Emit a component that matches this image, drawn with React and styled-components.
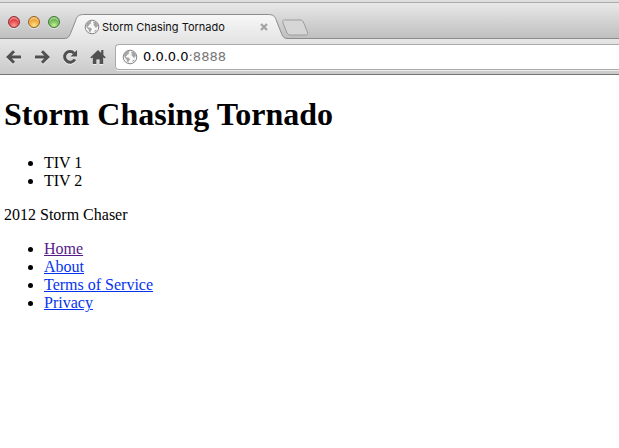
import React from "react";
import styled, { createGlobalStyle } from "styled-components";

const links = [
  { title: "Home", href: "#home", visited: true },
  { title: "About", href: "#about" },
  { title: "Terms of Service", href: "#terms" },
  { title: "Privacy", href: "#privacy" },
];

const Globe = () => (
  <svg width="16" height="16" viewBox="0 0 16 16" aria-hidden="true">
    <circle cx="8" cy="8" r="6.8" fill="#f8f8f8" stroke="#858585" />
    <path
      d="M2 6 3.4 3.4 6 1.8 7.6 2.4 6.6 3.6 7 4.8 5.4 5.6 4.6 7 3.6 7.2 4.4 8.4 6.8 8.8 8 10.2 6.6 12.2 6.4 14 5 12.6 4.6 10.4 2.8 8.8Z"
      fill="#a4a4a4"
    />
    <path
      d="M9.4 2.6 12 3 13.6 5 14.2 7.8 13 7.2 12.2 9.2 11 8 10.2 6.8 9.2 6 10.2 4.8 9.2 4ZM10.8 11.2 13 10.4 11.6 12.6 10.2 13Z"
      fill="#a4a4a4"
    />
  </svg>
);

const BackIcon = () => (
  <svg width="16" height="16" viewBox="0 0 16 16">
    <path d="M8 2.2 2.2 8 8 13.8M3 8H15" />
  </svg>
);

const ForwardIcon = () => (
  <svg width="16" height="16" viewBox="0 0 16 16">
    <path d="M8 2.2 13.8 8 8 13.8M13 8H1" />
  </svg>
);

const ReloadIcon = () => (
  <svg width="16" height="16" viewBox="0 0 16 16">
    <path d="M12 4.2A5.4 5.4 0 1 0 12.8 10.4" />
    <path d="M15 1V7.4H8.6Z" fill="#505050" stroke="none" />
  </svg>
);

const HomeIcon = () => (
  <svg width="16" height="16" viewBox="0 0 16 16">
    <path
      d="M8 1 .2 8.4 1.4 9.6 2.8 8.6V15H6.4V10.4H9.6V15H13.2V8.6L14.6 9.6 15.8 8.4 13.4 6V1H11.2V4Z"
      fill="#505050"
      stroke="none"
    />
  </svg>
);

const App = () => {
  return (
    <>
      <GlobalStyle />
      <Chrome>
        <TopEdge />
        <TabStrip>
          <WindowButtons>
            <WindowButton $rim="#8e2f30" $base="#e0383e" $glow="#ff9c94" aria-label="Close" />
            <WindowButton $rim="#93621c" $base="#eda033" $glow="#ffe48c" aria-label="Minimize" />
            <WindowButton $rim="#3f7630" $base="#66b34c" $glow="#c4f29c" aria-label="Zoom" />
          </WindowButtons>
          <Tab>
            <TabEdge viewBox="0 0 20 25" aria-hidden="true">
              <path d="M0 24.5C4 24.5 5 23 6.5 19.5L12 5.5C13.5 2 15 .5 20 .5V25H0Z" fill="url(#tabFill)" />
              <path d="M0 24.5C4 24.5 5 23 6.5 19.5L12 5.5C13.5 2 15 .5 20 .5" fill="none" stroke="#8c8c8c" />
              <defs>
                <linearGradient id="tabFill" x1="0" y1="0" x2="0" y2="1">
                  <stop offset="0" stopColor="#f7f7f7" />
                  <stop offset="1" stopColor="#e6e6e6" />
                </linearGradient>
              </defs>
            </TabEdge>
            <TabBody>
              <Globe />
              <TabTitle>Storm Chasing Tornado</TabTitle>
              <TabClose aria-label="Close tab">
                <svg width="8" height="8" viewBox="0 0 8 8">
                  <path d="M1 1 7 7M7 1 1 7" stroke="#a2a2a2" strokeWidth="2.2" />
                </svg>
              </TabClose>
            </TabBody>
            <TabEdge viewBox="0 0 20 25" aria-hidden="true">
              <path d="M20 24.5C16 24.5 15 23 13.5 19.5L8 5.5C6.5 2 5 .5 0 .5V25H20Z" fill="url(#tabFill)" />
              <path d="M20 24.5C16 24.5 15 23 13.5 19.5L8 5.5C6.5 2 5 .5 0 .5" fill="none" stroke="#8c8c8c" />
            </TabEdge>
          </Tab>
          <NewTab aria-label="New tab">
            <svg width="28" height="17" viewBox="0 0 28 17">
              <path
                d="M3.5 1H19C21 1 22 2 22.8 4L26.4 13C27.2 15 26.6 16 24.8 16H9.5C7.5 16 6.4 15 5.6 13L2 4C1.2 2 1.8 1 3.5 1Z"
                fill="#d6d6d6"
                stroke="#9c9c9c"
              />
            </svg>
          </NewTab>
        </TabStrip>
        <Toolbar>
          <ToolButtons>
            <ToolButton aria-label="Back">
              <BackIcon />
            </ToolButton>
            <ToolButton aria-label="Forward">
              <ForwardIcon />
            </ToolButton>
            <ToolButton aria-label="Reload">
              <ReloadIcon />
            </ToolButton>
            <ToolButton aria-label="Home">
              <HomeIcon />
            </ToolButton>
          </ToolButtons>
          <AddressBar>
            <Globe />
            <Address href="#home">
              0.0.0.0<span>:8888</span>
            </Address>
          </AddressBar>
        </Toolbar>
      </Chrome>
      <Page>
        <Title>Storm Chasing Tornado</Title>
        <List>
          <li>TIV 1</li>
          <li>TIV 2</li>
        </List>
        <Copyright>2012 Storm Chaser</Copyright>
        <List>
          {links.map((item) => (
            <li key={item.title}>
              <PageLink href={item.href} $visited={item.visited}>
                {item.title}
              </PageLink>
            </li>
          ))}
        </List>
      </Page>
    </>
  );
};

export default App;

const GlobalStyle = createGlobalStyle`
  * {
    box-sizing: border-box;
  }

  body {
    margin: 0;
    background: #fff;
  }

  button {
    padding: 0;
    border: none;
    background: none;
  }

  svg {
    display: block;
    flex-shrink: 0;
  }
`;

const Chrome = styled.header`
  font-family: "DejaVu Sans", sans-serif;
`;

const TopEdge = styled.div`
  height: 3px;
  background: #dedede;
  border-bottom: 1px solid #aaa;
`;

const TabStrip = styled.div`
  display: flex;
  align-items: flex-end;
  height: 36px;
  background: linear-gradient(#e8e8e8, #bebebe);
  box-shadow: inset 0 -1px #8c8c8c;
`;

const WindowButtons = styled.div`
  display: flex;
  align-self: center;
  gap: 8px;
  padding: 2px 0 0 8px;
`;

const WindowButton = styled.button`
  width: 12px;
  height: 12px;
  border-radius: 50%;
  border: 1px solid ${(props) => props.$rim};
  background: radial-gradient(
    circle at 50% 85%,
    ${(props) => props.$glow},
    ${(props) => props.$base} 60%
  );
  box-shadow: inset 0 2px 1px rgba(255, 255, 255, 0.4), 0 1px #e6e6e6;
`;

const Tab = styled.div`
  display: flex;
  height: 25px;
  margin-left: 4px;
`;

const TabEdge = styled.svg`
  width: 20px;
  height: 25px;
`;

const TabBody = styled.div`
  display: flex;
  align-items: center;
  width: 184px;
  border-top: 1px solid #8c8c8c;
  background: linear-gradient(#f7f7f7, #e6e6e6);
`;

const TabTitle = styled.span`
  flex: 1;
  padding-left: 2px;
  font-family: Inter, sans-serif;
  font-size: 11px;
  line-height: 16px;
  color: #111;
  white-space: nowrap;
`;

const TabClose = styled.button`
  padding-right: 0;
`;

const NewTab = styled.button`
  align-self: center;
  margin-left: -7px;
  padding-top: 12px;
`;

const Toolbar = styled.div`
  display: flex;
  align-items: center;
  gap: 9px;
  height: 36px;
  padding-left: 6px;
  background: linear-gradient(#e6e6e6, #cacaca);
  border-bottom: 1px solid #777;
`;

const ToolButtons = styled.div`
  display: flex;
  gap: 12px;
`;

const ToolButton = styled.button`
  filter: drop-shadow(0 1px #eee);

  svg {
    fill: none;
    stroke: #505050;
    stroke-width: 3;
  }
`;

const AddressBar = styled.div`
  display: flex;
  align-items: center;
  flex: 1;
  gap: 5px;
  height: 26px;
  padding-left: 6px;
  background: #fff;
  border: 1px solid #aaa;
  border-right: none;
  border-radius: 4px 0 0 4px;
  box-shadow: 0 1px #eee;
`;

const Address = styled.a`
  font-size: 13px;
  line-height: 18px;
  color: #000;
  text-decoration: none;

  span {
    color: #777;
  }
`;

const Page = styled.main`
  padding: 21px 4px;
  font-family: "Liberation Serif", "Times New Roman", serif;
  font-size: 16px;
  line-height: 18px;
  color: #000;
`;

const Title = styled.h1`
  margin: 0 0 21px;
  font-size: 32px;
  line-height: 37px;
`;

const List = styled.ul`
  margin: 0 0 16px;
  padding-left: 40px;
`;

const Copyright = styled.p`
  margin: 0 0 16px;
`;

const PageLink = styled.a`
  color: ${(props) => (props.$visited ? "#551a8b" : "#0433ee")};
  text-decoration: underline;
`;
